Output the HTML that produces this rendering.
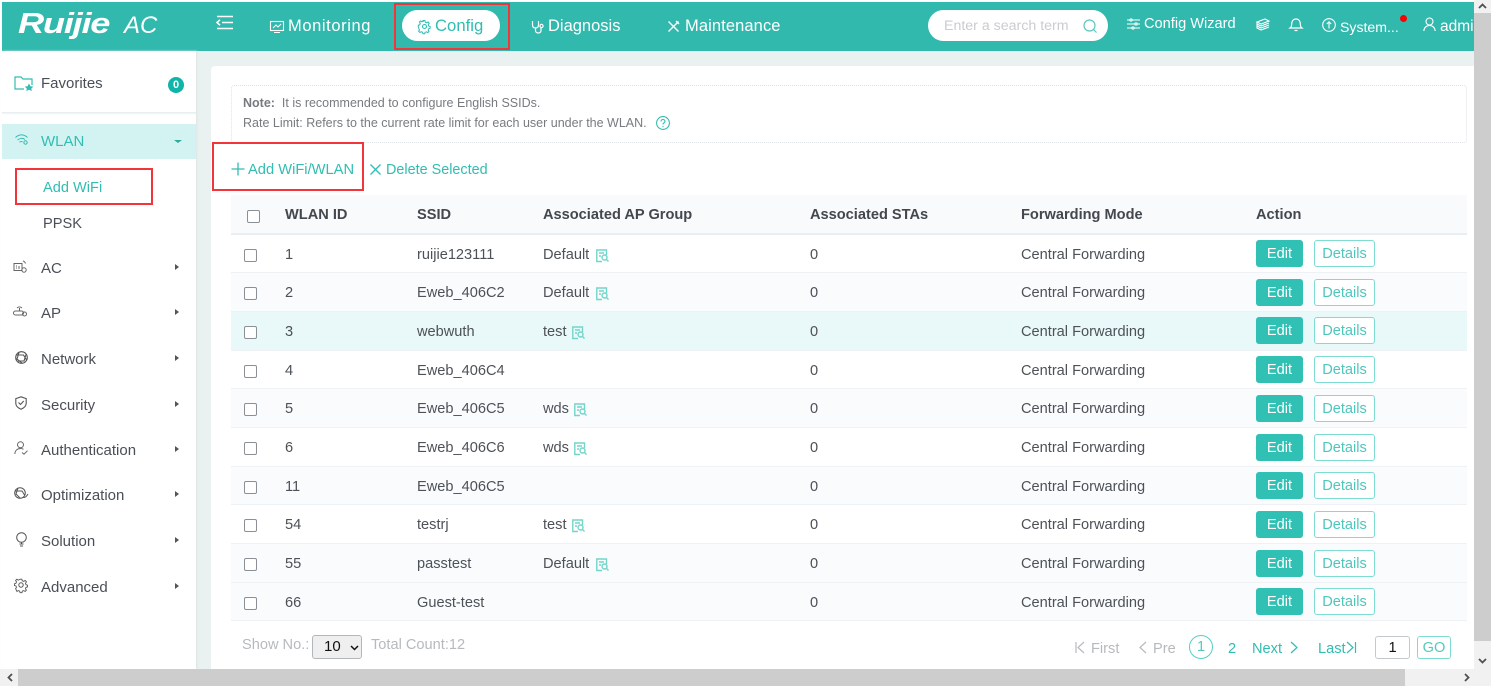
<!DOCTYPE html>
<html><head><meta charset="utf-8"><title>Ruijie AC</title>
<style>
*{box-sizing:border-box}
html,body{margin:0;padding:0;width:1491px;height:686px;overflow:hidden;background:#fff;font-family:"Liberation Sans",sans-serif;color:#4a4f57}
.a{position:absolute;white-space:nowrap;line-height:20px}
svg{position:absolute;fill:none;overflow:visible}
.hd{position:absolute;left:2px;top:2px;width:1472px;height:49px;background:#31b9ae}
.w{color:#fff;font-size:16.5px}
.s{font-size:15px;color:#4a4f57;left:41px}
.t{color:#31bdb2}
.red{position:absolute;border:2px solid #f2353a}
.arr{position:absolute;left:175px;width:0;height:0;border-left:4px solid #555;border-top:3.5px solid transparent;border-bottom:3.5px solid transparent}
.row{position:absolute;left:231px;width:1236px;height:38.7px;font-size:14.6px;color:#4d5158;border-bottom:1px solid #eef2f5}
.row>span{position:absolute;top:10px;line-height:20px;white-space:nowrap}
.cb{position:absolute;width:13px;height:13px;border:1.5px solid #8b8f96;border-radius:2px;background:#fff}
.e{position:absolute;left:1025px;top:5.5px;width:47px;height:27px;background:#31c0b4;color:#fff;border-radius:3px;text-align:center;line-height:28px;font-size:14.6px}
.d{position:absolute;left:1083px;top:5.5px;width:61px;height:27px;border:1px solid #7fdcd3;color:#4fc6bb;background:#fff;border-radius:3px;text-align:center;line-height:26px;font-size:14.6px}
.th{position:absolute;top:205px;font-size:14.6px;font-weight:bold;color:#43474e;line-height:20px;white-space:nowrap}
.pg{font-size:14.6px;top:639px}
.g{color:#b6babd}
</style></head><body>

<div class="hd"></div>

<!-- logo -->
<div class="a" style="left:18px;top:9px;font:italic bold 29px/30px 'Liberation Sans',sans-serif;color:#fff;letter-spacing:-1px;transform:scaleX(1.25);transform-origin:left">Ruijie</div>
<div class="a" style="left:124px;top:11px;font:italic 24px/30px 'Liberation Sans',sans-serif;color:#fff">AC</div>

<!-- collapse icon -->
<svg style="left:216px;top:15px" width="18" height="16" stroke="#fff" stroke-width="1.6"><path d="M1 1.500h16M6 7.500h11M1 13.500h16M4 4.800L1 7.500l3 2.700"/></svg>

<!-- Monitoring -->
<svg style="left:270px;top:21px" width="14" height="12" stroke="#fff" stroke-width="1.100"><rect x=".5" y=".5" width="13" height="9"/><path d="M3 7l3-3 2 2 3-3M4 11.500h6"/></svg>
<div class="a w" style="left:288px;top:16px;letter-spacing:.6px">Monitoring</div>

<!-- Config -->
<div style="position:absolute;left:402px;top:10px;width:98px;height:31px;border-radius:16px;background:#fff"></div>
<svg style="left:418px;top:20px" width="13" height="13" stroke="#31bdb2" stroke-width="1.100"><circle cx="6.500" cy="6.500" r="2"/><path d="M5.500.6h2l.4 1.700 1.500.7 1.500-.9 1.300 1.500-1 1.400.4 1.500 1.600.6v1.900l-1.600.5-.5 1.500.9 1.400-1.400 1.300-1.400-.9-1.500.6-.4 1.500h-1.900l-.5-1.600-1.400-.6-1.400.9-1.400-1.400.9-1.400-.6-1.400L.3 7.600V5.700l1.600-.5.6-1.500-1-1.400 1.400-1.300 1.400.9 1.500-.6z" transform="scale(.92)"/></svg>
<div class="a t" style="left:435px;top:16px;font-size:16.700px">Config</div>

<!-- Diagnosis -->
<svg style="left:531px;top:20px" width="13" height="14" stroke="#fff" stroke-width="1.200"><path d="M1.500 1v4c0 2 1.200 3 3 3s3-1 3-3V1M4.500 8v2.500c0 1.600 1.200 2.500 2.800 2.500s2.700-1 2.700-2.500V8"/><circle cx="10.500" cy="6" r="1.600"/></svg>
<div class="a w" style="left:548px;top:16px">Diagnosis</div>

<!-- Maintenance -->
<svg style="left:667px;top:20px" width="13" height="13" stroke="#fff" stroke-width="1.400"><path d="M1.500 1.500l10 10M11.500 1.500l-10 10M9 1l3 3"/></svg>
<div class="a w" style="left:685px;top:16px;letter-spacing:.1px">Maintenance</div>

<!-- search -->
<div style="position:absolute;left:928px;top:10px;width:180px;height:31px;border-radius:16px;background:#fff"></div>
<div class="a" style="left:944px;top:16px;font-size:14.200px;color:#c9ccd0">Enter a search term</div>
<svg style="left:1083px;top:19px" width="15" height="15" stroke="#5cc8bf" stroke-width="1.200"><circle cx="6.500" cy="6.500" r="5.500"/><path d="M10.500 10.500l3 3"/></svg>

<!-- Config Wizard -->
<svg style="left:1127px;top:18px" width="13" height="13" stroke="#fff" stroke-width="1.100"><path d="M0 2h13M0 6h13M0 10h13"/><circle cx="4" cy="2" r="1.100" fill="#31b9ae"/><circle cx="9" cy="6" r="1.100" fill="#31b9ae"/><circle cx="6" cy="10" r="1.100" fill="#31b9ae"/></svg>
<div class="a" style="left:1144px;top:14px;color:#fff;font-size:14.600px">Config Wizard</div>

<!-- stack -->
<svg style="left:1256px;top:18px" width="14" height="13" stroke="#fff" stroke-width="1.100"><path d="M1 4l8-3 4 2-8 3zM1 4v2l4 2 8-3M1 6v2l4 2 8-3M1 8v2l4 2 8-3"/></svg>
<!-- bell -->
<svg style="left:1289px;top:17px" width="14" height="15" stroke="#fff" stroke-width="1.200"><path d="M1 11h12c-1.400-1-1.700-2-1.700-4 0-3-1.700-5-4.300-5S2.700 4 2.700 7c0 2-.3 3-1.700 4zM5.500 13.500h3"/></svg>
<!-- system -->
<svg style="left:1322px;top:18px" width="14" height="14" stroke="#fff" stroke-width="1.100"><circle cx="7" cy="7" r="6.300"/><path d="M7 10.500V4M4.800 6L7 3.800 9.200 6"/></svg>
<div class="a" style="left:1340px;top:17px;color:#fff;font-size:14.100px">System...</div>
<div style="position:absolute;left:1400px;top:15px;width:7px;height:7px;border-radius:50%;background:#f00"></div>
<!-- admin -->
<svg style="left:1423px;top:17px" width="13" height="15" stroke="#fff" stroke-width="1.100"><circle cx="6.500" cy="4.500" r="3.500"/><path d="M.8 14c.3-3.500 2.700-5.500 5.700-5.500s5.400 2 5.700 5.500"/></svg>
<div style="position:absolute;left:1440px;top:17px;width:34px;height:20px;overflow:hidden;color:#fff;font-size:15.500px;line-height:20px;white-space:nowrap">admin</div>

<!-- sidebar -->
<div style="position:absolute;left:196px;top:51px;width:1278px;height:618px;background:#e9f2f0"></div>
<div style="position:absolute;left:2px;top:51px;width:194px;height:618px;background:#fff;box-shadow:1px 0 2px #dde5e4"></div>
<div style="position:absolute;left:2px;top:112px;width:194px;height:3px;background:linear-gradient(#e7ebee,#fff)"></div>

<svg style="left:14px;top:76px" width="20" height="15" stroke="#31bdb2" stroke-width="1.200"><path d="M10 13H1V1h6l2 2h9v6"/><path d="M15 7.500l1.500 2.700 2.800.4-2 2 .5 2.400-2.800-1.300-2.700 1.300.5-2.400-2-2 2.800-.4z" fill="#31bdb2" stroke="none"/></svg>
<div class="a s" style="top:74px">Favorites</div>
<div style="position:absolute;left:168px;top:77px;width:16px;height:16px;border-radius:50%;background:#0eb5a8;color:#fff;font-size:11px;font-weight:bold;line-height:16px;text-align:center">0</div>

<div style="position:absolute;left:2px;top:124px;width:194px;height:35px;background:#d3f3f3"></div>
<svg style="left:15px;top:134px" width="14" height="11" stroke="#31bdb2" stroke-width="1"><path d="M.5 3.500C4 0 9 0 12.500 3.500M2.500 6C5 4 8 4 10 5.500M4.500 8.200c1-.8 2-.9 3-.6"/><circle cx="10.500" cy="8.500" r="1.700"/></svg>
<div class="a s t" style="top:132px">WLAN</div>
<div style="position:absolute;left:174px;top:140px;width:0;height:0;border-top:3.500px solid #31a79d;border-left:4px solid transparent;border-right:4px solid transparent"></div>

<div class="a t" style="left:43px;top:178px;font-size:14.600px">Add WiFi</div>
<div class="a" style="left:43px;top:214px;font-size:14.600px;color:#4a4f57">PPSK</div>

<svg style="left:13px;top:260px" width="15" height="14" stroke="#666" stroke-width="1"><rect x="1" y="3.500" width="8" height="7"/><path d="M3 6h1M3 8h1M6 6v3M10 1c1.200.3 2 1 2.500 2.500"/><circle cx="11" cy="10" r="2.200"/></svg>
<div class="a s" style="top:259px">AC</div><div class="arr" style="top:264px"></div>

<svg style="left:13px;top:305px" width="15" height="13" stroke="#666" stroke-width="1"><rect x=".5" y="6" width="10" height="4" rx="2"/><path d="M4 3c1.500-1.300 3.500-1.300 5 0M6.500 3v3"/><circle cx="11.500" cy="9" r="2"/></svg>
<div class="a s" style="top:304px">AP</div><div class="arr" style="top:309px"></div>

<svg style="left:15px;top:351px" width="13" height="13" stroke="#555" stroke-width="1.100"><circle cx="6.500" cy="6.500" r="5.800"/><path d="M1.500 4h7l3 5M4 1.500L2 8l5 4M11 3.500L9 10H3"/></svg>
<div class="a s" style="top:350px">Network</div><div class="arr" style="top:355px"></div>

<svg style="left:15px;top:396px" width="12" height="14" stroke="#555" stroke-width="1.100"><path d="M6 .8l5.200 1.800v4.700c0 2.800-2.200 4.700-5.200 5.900-3-1.200-5.200-3.100-5.200-5.900V2.600z"/><path d="M3.500 6.500L5.500 8.500 8.700 5"/></svg>
<div class="a s" style="top:396px">Security</div><div class="arr" style="top:401px"></div>

<svg style="left:14px;top:441px" width="15" height="14" stroke="#666" stroke-width="1"><circle cx="6.500" cy="3.800" r="3"/><path d="M.8 13c.3-3.500 2.500-5.500 5.700-5.500 1.200 0 2.200.3 3 .8M8 11.500l2 1.700 3.500-3.500"/></svg>
<div class="a s" style="top:441px">Authentication</div><div class="arr" style="top:446px"></div>

<svg style="left:14px;top:487px" width="15" height="13" stroke="#555" stroke-width="1"><circle cx="6" cy="6" r="5.300"/><path d="M1.500 4h6.500l2.500 4M4 1L2 7l4 4M9.500 10.500c1.500.3 3-1 4.500-3.500"/></svg>
<div class="a s" style="top:486px">Optimization</div><div class="arr" style="top:491px"></div>

<svg style="left:16px;top:532px" width="11" height="15" stroke="#555" stroke-width="1"><circle cx="5.500" cy="5.500" r="4.800"/><path d="M3.500 12h4M4 14h3M5.500 10.300V12"/></svg>
<div class="a s" style="top:532px">Solution</div><div class="arr" style="top:537px"></div>

<svg style="left:14px;top:578px" width="14" height="14" stroke="#555" stroke-width="1"><circle cx="7" cy="7" r="2.200"/><path d="M6 .6h2l.4 1.800 1.600.7 1.600-1 1.400 1.500-1 1.500.5 1.600 1.700.6v2l-1.700.5-.5 1.600 1 1.500-1.400 1.400-1.600-1-1.500.6-.4 1.700H6l-.5-1.700-1.500-.6-1.500 1L1 11.200l1-1.500-.6-1.500L-.200 7.700v-2l1.600-.5.600-1.600-1-1.500L2.400.7l1.500 1L5.500 1z" transform="translate(.7 .6) scale(.9)"/></svg>
<div class="a s" style="top:578px">Advanced</div><div class="arr" style="top:583px"></div>

<!-- card -->
<div style="position:absolute;left:211px;top:66px;width:1263px;height:603px;background:#fff;border-radius:4px 0 0 0"></div>
<div style="position:absolute;left:231px;top:85px;width:1236px;height:58px;border:1px dotted #dfe2e5;border-radius:3px"></div>
<div class="a" style="left:243px;top:93px;font-size:12.500px;color:#777b80"><b>Note:</b>&nbsp; It is recommended to configure English SSIDs.</div>
<div class="a" style="left:243px;top:113px;font-size:12.500px;color:#777b80">Rate Limit: Refers to the current rate limit for each user under the WLAN.</div>
<svg style="left:656px;top:116px" width="14" height="14" stroke="#31bdb2" stroke-width="1.100"><circle cx="7" cy="7" r="6.400"/><path d="M5 5.500C5 4.200 5.900 3.500 7 3.500s2 .8 2 1.800c0 1.500-2 1.500-2 3.200M7 10v1"/></svg>

<!-- toolbar -->
<svg style="left:231px;top:162px" width="14" height="14" stroke="#31bdb2" stroke-width="1.300"><path d="M7 .5v13M.5 7h13"/></svg>
<div class="a t" style="left:248px;top:160px;font-size:14.700px">Add WiFi/WLAN</div>
<svg style="left:370px;top:164px" width="11" height="11" stroke="#31bdb2" stroke-width="1.300"><path d="M.5.500l10 10M10.500.500l-10 10"/></svg>
<div class="a t" style="left:386px;top:160px;font-size:14.400px">Delete Selected</div>

<!-- table head -->
<div style="position:absolute;left:231px;top:195px;width:1236px;height:39.500px;background:#f8fafb;border-bottom:2px solid #e9eef2"></div>
<div class="cb" style="left:247px;top:210px"></div>
<div class="th" style="left:285px">WLAN ID</div>
<div class="th" style="left:417px">SSID</div>
<div class="th" style="left:543px">Associated AP Group</div>
<div class="th" style="left:810px">Associated STAs</div>
<div class="th" style="left:1021px">Forwarding Mode</div>
<div class="th" style="left:1256px">Action</div>

<!-- rows -->
<div class="row" style="top:234.500px"><div class="cb" style="left:13px;top:14px"></div><span style="left:54px">1</span><span style="left:186px">ruijie123111</span><span style="left:312px">Default</span><svg style="left:365px;top:14px" width="13" height="14" stroke="#72d5c9" stroke-width="1.400"><path d="M10.500 6V1H.8v11.500H6M3 4h5M3 7h2"/><circle cx="8.500" cy="8.500" r="2.500"/><path d="M10.500 10.500l2 2"/></svg><span style="left:579px">0</span><span style="left:790px">Central Forwarding</span><div class="e">Edit</div><div class="d">Details</div></div>

<div class="row" style="top:273.200px;background:#f9fbfd"><div class="cb" style="left:13px;top:14px"></div><span style="left:54px">2</span><span style="left:186px">Eweb_406C2</span><span style="left:312px">Default</span><svg style="left:365px;top:14px" width="13" height="14" stroke="#72d5c9" stroke-width="1.400"><path d="M10.500 6V1H.8v11.500H6M3 4h5M3 7h2"/><circle cx="8.500" cy="8.500" r="2.500"/><path d="M10.500 10.500l2 2"/></svg><span style="left:579px">0</span><span style="left:790px">Central Forwarding</span><div class="e">Edit</div><div class="d">Details</div></div>

<div class="row" style="top:311.900px;background:#e9f9f9"><div class="cb" style="left:13px;top:14px"></div><span style="left:54px">3</span><span style="left:186px">webwuth</span><span style="left:312px">test</span><svg style="left:341px;top:14px" width="13" height="14" stroke="#72d5c9" stroke-width="1.400"><path d="M10.500 6V1H.8v11.500H6M3 4h5M3 7h2"/><circle cx="8.500" cy="8.500" r="2.500"/><path d="M10.500 10.500l2 2"/></svg><span style="left:579px">0</span><span style="left:790px">Central Forwarding</span><div class="e">Edit</div><div class="d">Details</div></div>

<div class="row" style="top:350.600px"><div class="cb" style="left:13px;top:14px"></div><span style="left:54px">4</span><span style="left:186px">Eweb_406C4</span><span style="left:579px">0</span><span style="left:790px">Central Forwarding</span><div class="e">Edit</div><div class="d">Details</div></div>

<div class="row" style="top:389.300px;background:#f9fbfd"><div class="cb" style="left:13px;top:14px"></div><span style="left:54px">5</span><span style="left:186px">Eweb_406C5</span><span style="left:312px">wds</span><svg style="left:343px;top:14px" width="13" height="14" stroke="#72d5c9" stroke-width="1.400"><path d="M10.500 6V1H.8v11.500H6M3 4h5M3 7h2"/><circle cx="8.500" cy="8.500" r="2.500"/><path d="M10.500 10.500l2 2"/></svg><span style="left:579px">0</span><span style="left:790px">Central Forwarding</span><div class="e">Edit</div><div class="d">Details</div></div>

<div class="row" style="top:428px"><div class="cb" style="left:13px;top:14px"></div><span style="left:54px">6</span><span style="left:186px">Eweb_406C6</span><span style="left:312px">wds</span><svg style="left:343px;top:14px" width="13" height="14" stroke="#72d5c9" stroke-width="1.400"><path d="M10.500 6V1H.8v11.500H6M3 4h5M3 7h2"/><circle cx="8.500" cy="8.500" r="2.500"/><path d="M10.500 10.500l2 2"/></svg><span style="left:579px">0</span><span style="left:790px">Central Forwarding</span><div class="e">Edit</div><div class="d">Details</div></div>

<div class="row" style="top:466.700px;background:#f9fbfd"><div class="cb" style="left:13px;top:14px"></div><span style="left:54px">11</span><span style="left:186px">Eweb_406C5</span><span style="left:579px">0</span><span style="left:790px">Central Forwarding</span><div class="e">Edit</div><div class="d">Details</div></div>

<div class="row" style="top:505.400px"><div class="cb" style="left:13px;top:14px"></div><span style="left:54px">54</span><span style="left:186px">testrj</span><span style="left:312px">test</span><svg style="left:341px;top:14px" width="13" height="14" stroke="#72d5c9" stroke-width="1.400"><path d="M10.500 6V1H.8v11.500H6M3 4h5M3 7h2"/><circle cx="8.500" cy="8.500" r="2.500"/><path d="M10.500 10.500l2 2"/></svg><span style="left:579px">0</span><span style="left:790px">Central Forwarding</span><div class="e">Edit</div><div class="d">Details</div></div>

<div class="row" style="top:544.100px;background:#f9fbfd"><div class="cb" style="left:13px;top:14px"></div><span style="left:54px">55</span><span style="left:186px">passtest</span><span style="left:312px">Default</span><svg style="left:365px;top:14px" width="13" height="14" stroke="#72d5c9" stroke-width="1.400"><path d="M10.500 6V1H.8v11.500H6M3 4h5M3 7h2"/><circle cx="8.500" cy="8.500" r="2.500"/><path d="M10.500 10.500l2 2"/></svg><span style="left:579px">0</span><span style="left:790px">Central Forwarding</span><div class="e">Edit</div><div class="d">Details</div></div>

<div class="row" style="top:582.800px;background:#f9fbfd"><div class="cb" style="left:13px;top:14px"></div><span style="left:54px">66</span><span style="left:186px">Guest-test</span><span style="left:579px">0</span><span style="left:790px">Central Forwarding</span><div class="e">Edit</div><div class="d">Details</div></div>

<!-- footer -->
<div class="a g" style="left:242px;top:635px;font-size:14.600px">Show No.:</div>
<div style="position:absolute;left:312px;top:635px;width:50px;height:24px;border:1px solid #b4b7ba;border-radius:3px;background:#efefef"></div>
<div class="a" style="left:324px;top:637px;font-size:15px;color:#111">10</div>
<svg style="left:350px;top:645px" width="9" height="6" stroke="#111" stroke-width="1.500"><path d="M1 1l3.500 3.500L8 1"/></svg>
<div class="a g" style="left:371px;top:635px;font-size:14.600px">Total Count:12</div>

<svg style="left:1075px;top:641px" width="11" height="13" stroke="#b6babd" stroke-width="1.200"><path d="M1 1v11M9 1L3 6.500 9 12"/></svg>
<div class="a pg g" style="left:1091px">First</div>
<svg style="left:1139px;top:641px" width="8" height="13" stroke="#b6babd" stroke-width="1.200"><path d="M7 1L1 6.500 7 12"/></svg>
<div class="a pg g" style="left:1153px">Pre</div>
<div style="position:absolute;left:1189px;top:635px;width:24px;height:24px;border:1px solid #55cfc4;border-radius:50%;color:#55c8be;text-align:center;line-height:23px;font-size:14.600px">1</div>
<div class="a pg t" style="left:1228px">2</div>
<div class="a pg t" style="left:1252px">Next</div>
<svg style="left:1290px;top:641px" width="8" height="13" stroke="#31bdb2" stroke-width="1.200"><path d="M1 1l6 5.500L1 12"/></svg>
<div class="a pg t" style="left:1318px">Last</div>
<svg style="left:1346px;top:641px" width="11" height="13" stroke="#31bdb2" stroke-width="1.200"><path d="M1 1l6 5.500L1 12M9.500 1v11"/></svg>
<div style="position:absolute;left:1375px;top:636px;width:35px;height:23px;border:1px solid #c6c9cc;border-radius:3px;background:#fff;color:#111;text-align:center;line-height:22px;font-size:14.600px">1</div>
<div style="position:absolute;left:1417px;top:636px;width:34px;height:23px;border:1px solid #7fdcd3;border-radius:3px;background:#fff;color:#55c8be;text-align:center;line-height:22px;font-size:14.600px">GO</div>

<!-- scrollbars -->
<div style="position:absolute;left:1474px;top:0;width:17px;height:669px;background:#cdcdcd"></div>
<div style="position:absolute;left:1474px;top:641px;width:17px;height:28px;background:#f1f1f1"></div>
<div style="position:absolute;left:1474px;top:0;width:17px;height:13px;background:#f1f1f1"></div>
<svg style="left:1478px;top:3px" width="9" height="6" stroke="#505050" stroke-width="1.800"><path d="M1 5l3.500-3.500L8 5"/></svg>
<svg style="left:1478px;top:658px" width="9" height="6" stroke="#505050" stroke-width="1.800"><path d="M1 1l3.500 3.500L8 1"/></svg>
<div style="position:absolute;left:0;top:669px;width:1474px;height:17px;background:#cdcdcd"></div>
<div style="position:absolute;left:0;top:669px;width:18px;height:17px;background:#f1f1f1"></div>
<div style="position:absolute;left:1405px;top:669px;width:86px;height:17px;background:#f1f1f1"></div>
<svg style="left:7px;top:673px" width="6" height="9" stroke="#505050" stroke-width="1.800"><path d="M5 1L1.500 4.500 5 8"/></svg>
<svg style="left:1464px;top:673px" width="6" height="9" stroke="#505050" stroke-width="1.800"><path d="M1 1l3.500 3.500L1 8"/></svg>

<!-- annotation boxes -->
<div class="red" style="left:394px;top:3px;width:116px;height:47px"></div>
<div class="red" style="left:15px;top:168px;width:138px;height:37px"></div>
<div class="red" style="left:212px;top:142px;width:152px;height:49px"></div>

</body></html>
